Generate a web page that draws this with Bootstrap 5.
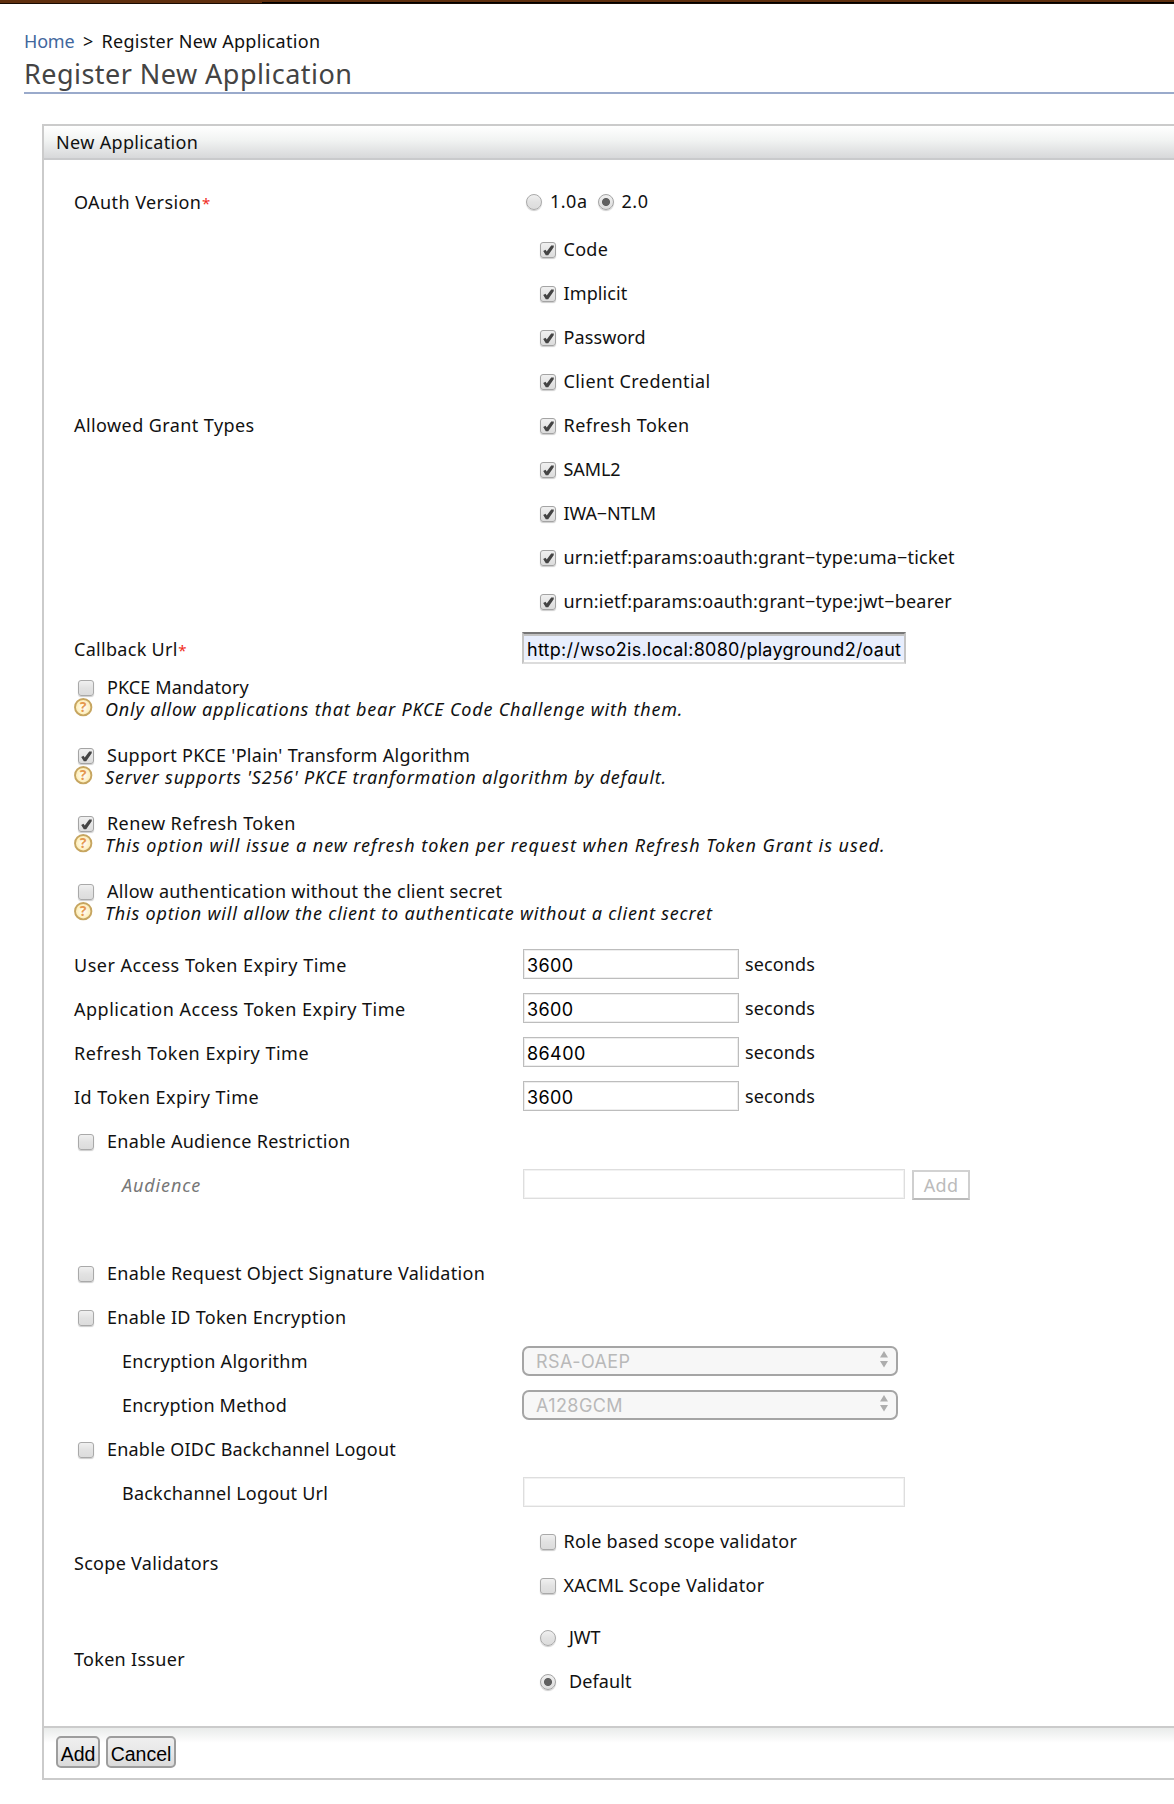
<!DOCTYPE html>
<html lang="en">
<head>
<meta charset="utf-8">
<meta name="viewport" content="width=device-width, initial-scale=1">
<title>Register New Application</title>
<link href="https://cdn.jsdelivr.net/npm/bootstrap@5.3.0/dist/css/bootstrap.min.css" rel="stylesheet">
<style>
body{font:18px/22px "Noto Sans","Open Sans",sans-serif;color:#111;letter-spacing:.3px;background:#fff;overflow-x:hidden}
.topbar{height:4px;background:linear-gradient(#000,#000) 262px 2px no-repeat,#5f2f0e}
.topbar::after{content:"";display:block;height:4px;border-bottom:1px solid #180b02}
.crumbs{padding:26px 0 0 24px}
.crumbs a{color:#41679d;letter-spacing:-.2px}
.crumbs .sep{margin:0 8px 0 8.5px}
.page-title{font-size:27px;line-height:36px;font-weight:400;color:#444;letter-spacing:.46px;margin:4px 0 0 24px;height:38px;border-bottom:2px solid #9aaacb}
.panel{margin:30px 0 0 42px;border:2px solid #cbcbcb;border-right:0}
.panel-head{height:34px;line-height:32px;padding-left:12px;letter-spacing:.34px;border-bottom:2px solid #c9cacc;background:linear-gradient(#fff,#f1f3f2 45%,#d7d8da)}
.panel-main{padding:19px 0 23px 30px}
.frow{display:flex;align-items:center;height:44px}
.frow.tall{height:48px}
.frow.gap-after{margin-bottom:44px}
.lab{width:448px;flex:none;padding-top:1px;white-space:nowrap}
.lab.group{padding-top:0;padding-bottom:1px}
.sub{padding-left:48px}
.muted-lab{color:#777;letter-spacing:.88px}
.sp0{letter-spacing:-.1px}.sp1{letter-spacing:.1px}.sp2{letter-spacing:.21px}.sp4{letter-spacing:.42px}.sp5{letter-spacing:.5px}
.req{color:#f02a1c;font-size:15px;line-height:1;margin-left:.5px}
.form-check-input{float:none;flex:none;width:16px;height:16px;margin:1px 0 0;border:1px solid #a9a9a9;background:linear-gradient(#f0f0f0,#e2e2e2 50%,#dcdcdc);box-shadow:0 1px 1px rgba(0,0,0,.2);opacity:1}
.form-check-input[type=checkbox]{border-radius:3px}
.form-check-input:checked{border-color:#a4a4a4;background-color:#e2e2e2}
.form-check-input:checked[type=checkbox]{background:url("data:image/svg+xml,%3Csvg xmlns='http://www.w3.org/2000/svg' viewBox='0 0 14 14'%3E%3Cpath d='M2.2 7.9 4.5 6.7 5.7 8.5 10.2 2.4 12.8 2.5 12.7 4.3 7.2 12.2 4.8 12.3Z' fill='%23444'/%3E%3C/svg%3E") center/14px no-repeat,linear-gradient(#f0f0f0,#dcdcdc)}
.form-check-input:checked[type=radio]{background:radial-gradient(circle,#606060 3.6px,transparent 4.4px),linear-gradient(#f0f0f0,#dcdcdc)}
.ver-second{margin-left:10px}
.grant-block{padding:4px 0 1px}
.grants{padding-left:18px}
.grants .frow{gap:7.5px}
.grants .form-check-input+span{white-space:nowrap}
.issuers .frow{gap:13px}
.opts{display:flex;flex-direction:column;gap:20px;padding:4px 0 14px}
.opt{height:48px}
.opt .line1{display:flex;align-items:center;height:22px;padding-left:4px}
.opt .line1 span,.toggle span{margin-left:13px}
.toggle{padding:2px 0 0 4px}
.opt .line2{display:flex;height:22px;font-style:italic;letter-spacing:.8px;white-space:nowrap}
.opt .line2.wide{letter-spacing:.96px}
.opt .line2 svg{flex:none;margin:0 12px 0 0}
.fld{font:18px/22px Inter,"Liberation Sans",sans-serif;letter-spacing:.4px;color:#000;background:#fff;border:1px solid #bdbdbd;box-shadow:inset 0 0 0 1px #eee;border-radius:0;height:30px;margin-left:1px;padding:4px 3px 2px}
.fld.short{width:216px}
.fld.long{width:382px}
.fld:disabled{background:#fff;border-color:#dedede;box-shadow:inset 0 0 0 1px #f2f2f2}
.fld.url{width:384px;height:32px;margin:0;padding:4px 3px 1px;letter-spacing:.26px;background:#e8eefd;border:2px solid #c4c4c4;border-top-color:#777;border-bottom-color:#dcdcdc;box-shadow:inset 0 2px #c2c2c2,inset 0 -2px #fff}
.unit{margin-left:6px;letter-spacing:.13px}
.btn-mini{width:58px;height:30px;padding:0;margin:2px 0 0 7px;font-size:18px;line-height:24px;letter-spacing:.3px;border:2px solid #cfcfcf;border-radius:0;background:#fff}
.btn-mini:disabled{color:#bbb;background:#fff;border-color:#d2d2d2 #cfcfcf #bbb;opacity:1}
.picker{position:relative;width:376px;height:30px;margin-top:2px;border:2px solid #a5a5a5;border-radius:7px;background:#f7f7f7;color:#b9b9b9;font:18px/27px Inter,sans-serif;letter-spacing:.42px;padding-left:12px}
.picker svg{position:absolute;right:7px;top:3px}
.panel-foot{display:flex;gap:6px;padding:8px 12px;background:linear-gradient(#e9ebea,#fff 15px);border-top:2px solid #cbcbcb;box-sizing:content-box;height:34px}
.btn-act{height:32px;padding:0;border:2px solid #9d9d9d;border-radius:5px;background:linear-gradient(#efefef,#e8e8e8 50%,#dadada);font:19.5px/32px "Liberation Sans",sans-serif;letter-spacing:0;color:#000}
.btn-act.w-add{width:44px}
.btn-act.w-cancel{width:70px}
</style>
</head>
<body>
<div class="topbar"></div>
<nav class="crumbs"><a class="text-decoration-none" href="#">Home</a><span class="sep">&gt;</span><span>Register New Application</span></nav>
<h1 class="page-title">Register New Application</h1>

<form class="panel">
  <div class="panel-head">New Application</div>
  <div class="panel-main">
    <div class="frow">
      <div class="lab sp4">OAuth Version<span class="req">*</span></div>
      <div class="d-flex align-items-center ps-1">
        <input class="form-check-input" type="radio" name="ver"><span class="ms-2 sp5">1.0a</span>
        <input class="form-check-input ver-second me-2" type="radio" name="ver" checked><span class="sp5">2.0</span>
      </div>
    </div>

    <div class="d-flex align-items-center grant-block">
      <div class="lab group sp4">Allowed Grant Types</div>
      <div class="grants">
        <div class="frow"><input class="form-check-input" type="checkbox" checked><span>Code</span></div>
        <div class="frow"><input class="form-check-input" type="checkbox" checked><span class="sp1">Implicit</span></div>
        <div class="frow"><input class="form-check-input" type="checkbox" checked><span class="sp1">Password</span></div>
        <div class="frow"><input class="form-check-input" type="checkbox" checked><span class="sp4">Client Credential</span></div>
        <div class="frow"><input class="form-check-input" type="checkbox" checked><span class="sp5">Refresh Token</span></div>
        <div class="frow"><input class="form-check-input" type="checkbox" checked><span class="sp0">SAML2</span></div>
        <div class="frow"><input class="form-check-input" type="checkbox" checked><span class="sp0">IWA−NTLM</span></div>
        <div class="frow"><input class="form-check-input" type="checkbox" checked><span class="sp2">urn:ietf:params:oauth:grant−type:uma−ticket</span></div>
        <div class="frow"><input class="form-check-input" type="checkbox" checked><span class="sp2">urn:ietf:params:oauth:grant−type:jwt−bearer</span></div>
      </div>
    </div>

    <div class="frow tall">
      <div class="lab">Callback Url<span class="req">*</span></div>
      <input class="fld url" type="text" value="http://wso2is.local:8080/playground2/oaut">
    </div>

    <div class="opts">
      <div class="opt">
        <div class="line1"><input class="form-check-input" type="checkbox"><span class="sp1">PKCE Mandatory</span></div>
        <div class="line2"><svg width="19" height="19"><use href="#help"/></svg>Only allow applications that bear PKCE Code Challenge with them.</div>
      </div>
      <div class="opt">
        <div class="line1"><input class="form-check-input" type="checkbox" checked><span>Support PKCE 'Plain' Transform Algorithm</span></div>
        <div class="line2"><svg width="19" height="19"><use href="#help"/></svg>Server supports 'S256' PKCE tranformation algorithm by default.</div>
      </div>
      <div class="opt">
        <div class="line1"><input class="form-check-input" type="checkbox" checked><span class="sp4">Renew Refresh Token</span></div>
        <div class="line2 wide"><svg width="19" height="19"><use href="#help"/></svg>This option will issue a new refresh token per request when Refresh Token Grant is used.</div>
      </div>
      <div class="opt">
        <div class="line1"><input class="form-check-input" type="checkbox"><span>Allow authentication without the client secret</span></div>
        <div class="line2"><svg width="19" height="19"><use href="#help"/></svg>This option will allow the client to authenticate without a client secret</div>
      </div>
    </div>

    <div class="frow"><div class="lab sp5">User Access Token Expiry Time</div><input class="fld short" value="3600"><span class="unit">seconds</span></div>
    <div class="frow"><div class="lab sp5">Application Access Token Expiry Time</div><input class="fld short" value="3600"><span class="unit">seconds</span></div>
    <div class="frow"><div class="lab sp5">Refresh Token Expiry Time</div><input class="fld short" value="86400"><span class="unit">seconds</span></div>
    <div class="frow"><div class="lab sp5">Id Token Expiry Time</div><input class="fld short" value="3600"><span class="unit">seconds</span></div>

    <div class="frow toggle"><input class="form-check-input" type="checkbox"><span>Enable Audience Restriction</span></div>
    <div class="frow gap-after">
      <div class="lab sub muted-lab fst-italic">Audience</div>
      <input class="fld long" disabled><button type="button" class="btn btn-mini" disabled>Add</button>
    </div>

    <div class="frow toggle"><input class="form-check-input" type="checkbox"><span>Enable Request Object Signature Validation</span></div>
    <div class="frow toggle"><input class="form-check-input" type="checkbox"><span>Enable ID Token Encryption</span></div>
    <div class="frow"><div class="lab sub">Encryption Algorithm</div>
      <div class="picker">RSA-OAEP<svg width="10" height="17"><path d="M5 0 9 6.4H1ZM5 16.5 9 10H1Z" fill="#adadad"/></svg></div></div>
    <div class="frow"><div class="lab sub sp2">Encryption Method</div>
      <div class="picker">A128GCM<svg width="10" height="17"><path d="M5 0 9 6.4H1ZM5 16.5 9 10H1Z" fill="#adadad"/></svg></div></div>
    <div class="frow toggle"><input class="form-check-input" type="checkbox"><span class="sp2">Enable OIDC Backchannel Logout</span></div>
    <div class="frow"><div class="lab sub sp2">Backchannel Logout Url</div><input class="fld long" disabled></div>

    <div class="d-flex align-items-center" style="margin-top:5px">
      <div class="lab group">Scope Validators</div>
      <div class="grants">
        <div class="frow"><input class="form-check-input" type="checkbox"><span>Role based scope validator</span></div>
        <div class="frow"><input class="form-check-input" type="checkbox"><span>XACML Scope Validator</span></div>
      </div>
    </div>
    <div class="d-flex align-items-center mt-2">
      <div class="lab group">Token Issuer</div>
      <div class="grants issuers">
        <div class="frow"><input class="form-check-input" type="radio" name="iss"><span class="sp0">JWT</span></div>
        <div class="frow"><input class="form-check-input" type="radio" name="iss" checked><span class="sp1">Default</span></div>
      </div>
    </div>
  </div>
  <div class="panel-foot">
    <button type="button" class="btn-act w-add">Add</button>
    <button type="button" class="btn-act w-cancel">Cancel</button>
  </div>
</form>

<svg width="0" height="0" class="d-block">
  <defs>
    <radialGradient id="cream"><stop offset="0" stop-color="#fff"/><stop offset="1" stop-color="#fdebae"/></radialGradient>
    <symbol id="help" viewBox="0 0 19 19">
      <circle cx="9.2" cy="9.2" r="8.2" fill="url(#cream)" stroke="#c6a560" stroke-width="1.9"/>
      <text x="9.2" y="14.2" text-anchor="middle" font-family="Open Sans, sans-serif" font-size="14" font-style="normal" font-weight="700" letter-spacing="0" fill="#e5994e">?</text>
    </symbol>
  </defs>
</svg>
<script src="https://cdn.jsdelivr.net/npm/bootstrap@5.3.0/dist/js/bootstrap.bundle.min.js"></script>
</body>
</html>
